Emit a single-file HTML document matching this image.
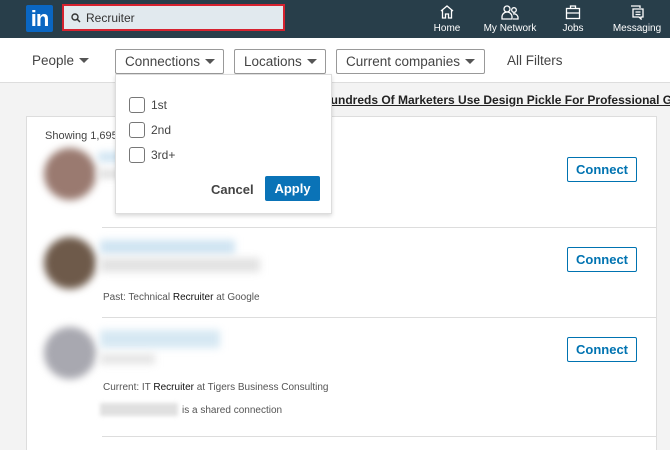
<!DOCTYPE html>
<html><head><meta charset="utf-8"><style>
*{box-sizing:border-box;margin:0;padding:0}
body{width:670px;height:450px;overflow:hidden;background:#f3f3f3;font-family:"Liberation Sans",sans-serif;position:relative;color:#333}
.hdr{position:absolute;left:0;top:0;width:670px;height:38px;background:#283e4a}
.logo{position:absolute;left:26px;top:5px;width:27px;height:27px;background:#0a66c2;border-radius:2px;color:#fff;font-weight:bold;font-size:22px;line-height:28px;text-align:center;letter-spacing:-1px}
.search{position:absolute;left:62px;top:4px;width:223px;height:27px;border:2px solid #d6222f;background:#e1e9ee}
.search span{position:absolute;left:22px;top:5px;font-size:12px;color:#333}
.nav{position:absolute;top:4px;color:#fff;font-size:10px;text-align:center;white-space:nowrap}
.nav svg{display:block;margin:0 auto 3px}
.fbar{position:absolute;left:0;top:38px;width:670px;height:45px;background:#fff;border-bottom:1px solid #ddd}
.fb{position:absolute;top:11px;height:25px;border:1px solid #999;border-radius:2px;font-size:13.5px;color:#444;line-height:23px;padding:0 0 0 9px;white-space:nowrap}
.tri{display:inline-block;width:0;height:0;border-left:5px solid transparent;border-right:5px solid transparent;border-top:5px solid #555;vertical-align:middle;margin-left:5px;margin-top:-2px}
.adw{position:absolute;left:300px;top:92px;width:370px;height:18px;overflow:hidden}
.ad{position:absolute;left:22px;top:1px;font-size:12px;font-weight:bold;text-decoration:underline;color:#222;white-space:nowrap}
.card{position:absolute;left:26px;top:116px;width:631px;height:334px;background:#fff;border:1px solid #ddd;border-bottom:none}
.div{position:absolute;left:102px;width:554px;height:1px;background:#ddd}
.cb{position:absolute;left:567px;width:70px;height:25px;border:1px solid #0073b1;border-radius:2px;color:#0073b1;font-weight:bold;font-size:13px;text-align:center;line-height:23px}
.av{position:absolute;left:44px;width:52px;height:52px;border-radius:50%;filter:blur(4px)}
.blur{position:absolute;filter:blur(4px)}
.sm{position:absolute;left:103px;font-size:10px;color:#555}
.sm b{color:#111;font-weight:normal}
.dd{position:absolute;left:115px;top:74px;width:217px;height:140px;background:#fff;border:1px solid #ddd;box-shadow:0 2px 4px rgba(0,0,0,.15)}
.chk{position:absolute;left:13px;width:16px;height:16px;border:1px solid #777;border-radius:3px}
.cl{position:absolute;left:35px;font-size:12px;color:#444}
</style></head><body>
<div class="hdr">
<div class="logo">in</div>
<div class="search"><svg style="position:absolute;left:7px;top:7px" width="10" height="10" viewBox="0 0 10 10"><circle cx="4" cy="4" r="3" fill="none" stroke="#333" stroke-width="1.4"/><path d="M6.2 6.2L9 9" stroke="#333" stroke-width="1.5"/></svg><span>Recruiter</span></div>
<div class="nav" style="left:432px;width:30px"><svg width="16" height="16" viewBox="0 0 16 16" fill="none" stroke="#fff" stroke-width="1.3"><path d="M2 7L8 2l6 5M3.5 6v8h3v-4h3v4h3V6"/></svg>Home</div>
<div class="nav" style="left:482px;width:56px"><svg width="18" height="16" viewBox="0 0 18 16" fill="none" stroke="#fff" stroke-width="1.3"><circle cx="6" cy="5" r="3"/><path d="M1 15v-2a5 5 0 0110 0v2z"/><circle cx="13" cy="6" r="2.3"/><path d="M12 15h5v-2a4 4 0 00-5-3"/></svg>My Network</div>
<div class="nav" style="left:561px;width:24px"><svg width="16" height="16" viewBox="0 0 16 16" fill="none" stroke="#fff" stroke-width="1.3"><rect x="1.5" y="4.5" width="13" height="10"/><path d="M5.5 4.5V2h5v2.5M1.5 9h13"/></svg>Jobs</div>
<div class="nav" style="left:611px;width:52px"><svg width="16" height="16" viewBox="0 0 16 16" fill="none" stroke="#fff" stroke-width="1.3"><path d="M2 2h9v2M4 5h10v8h-2v2l-2-2H4z M6.5 8h5M6.5 10.5h5"/></svg>Messaging</div>
</div>
<div class="fbar">
<div class="fb" style="left:23px;border:none;color:#444">People<span class="tri"></span></div>
<div class="fb" style="left:115px;width:109px">Connections<span class="tri"></span></div>
<div class="fb" style="left:234px;width:92px">Locations<span class="tri"></span></div>
<div class="fb" style="left:336px;width:149px">Current companies<span class="tri"></span></div>
<div class="fb" style="left:498px;border:none;color:#444">All Filters</div>
</div>
<div class="adw"><div class="ad">Hundreds Of Marketers Use Design Pickle For Professional Graphics</div></div>
<div class="card"></div>
<div style="position:absolute;left:45px;top:130px;font-size:11px;color:#444">Showing 1,695 results</div>
<div class="av" style="top:148px;background:#9a7a70"></div>
<div class="blur" style="left:98px;top:152px;width:50px;height:10px;background:#cfe4f2"></div>
<div class="blur" style="left:98px;top:170px;width:30px;height:8px;background:#ddd"></div>
<div class="cb" style="top:157px">Connect</div>
<div class="div" style="top:227px"></div>
<div class="av" style="top:237px;background:#6e5a4a"></div>
<div class="blur" style="left:100px;top:240px;width:135px;height:14px;background:#cfe4f2"></div>
<div class="blur" style="left:100px;top:258px;width:160px;height:14px;background:#e2e2e2"></div>
<div class="sm" style="top:292px">Past: Technical <b>Recruiter</b> at Google</div>
<div class="cb" style="top:247px">Connect</div>
<div class="div" style="top:317px"></div>
<div class="av" style="top:327px;background:#a8a8b0"></div>
<div class="blur" style="left:100px;top:330px;width:120px;height:18px;background:#d6e8f3"></div>
<div class="blur" style="left:100px;top:354px;width:55px;height:10px;background:#e4e4e4"></div>
<div class="sm" style="top:382px">Current: IT <b>Recruiter</b> at Tigers Business Consulting</div>
<div class="blur" style="left:100px;top:403px;width:78px;height:13px;background:#e0e0e0;filter:blur(2px)"></div>
<div class="sm" style="left:182px;top:405px">is a shared connection</div>
<div class="cb" style="top:337px">Connect</div>
<div class="div" style="top:436px"></div>
<div class="dd">
<div class="chk" style="top:22px"></div><div class="cl" style="top:23px">1st</div>
<div class="chk" style="top:47px"></div><div class="cl" style="top:48px">2nd</div>
<div class="chk" style="top:72px"></div><div class="cl" style="top:73px">3rd+</div>
<div style="position:absolute;left:95px;top:107px;font-size:13px;color:#444;font-weight:bold">Cancel</div>
<div style="position:absolute;left:149px;top:101px;width:55px;height:25px;background:#0a73b7;color:#fff;font-weight:bold;font-size:13px;text-align:center;line-height:25px;border-radius:2px">Apply</div>
</div>
</body></html>
